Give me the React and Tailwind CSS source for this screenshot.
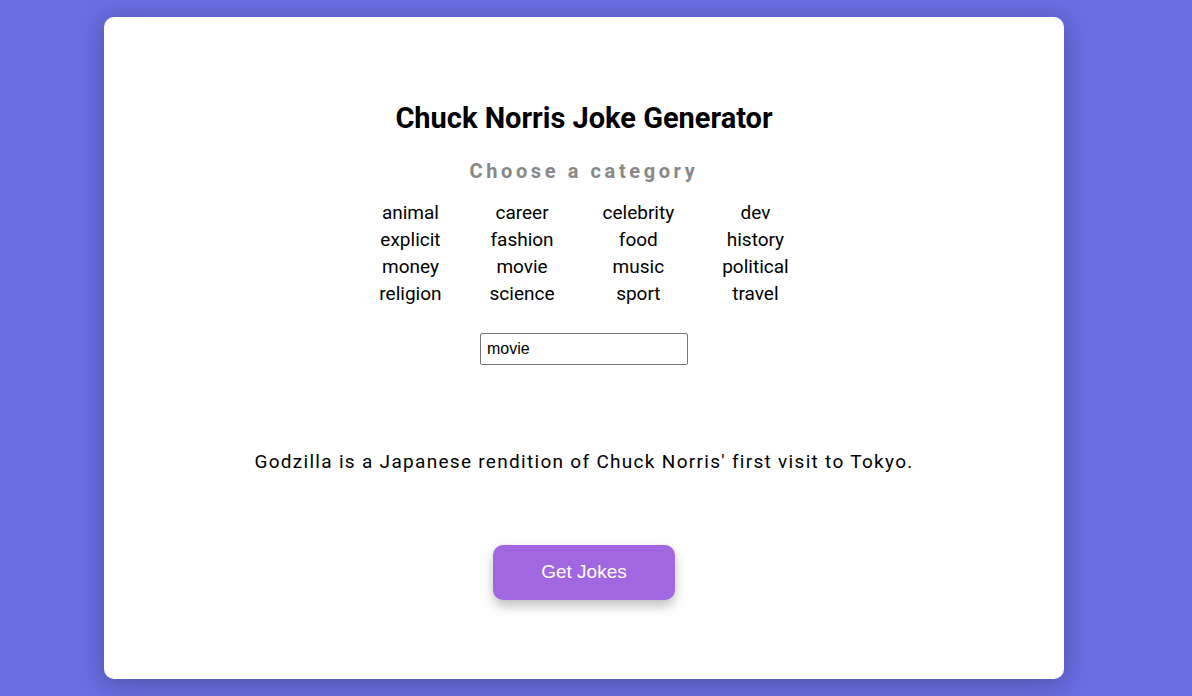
export default function App() {
  const cats = [
    "animal", "career", "celebrity", "dev",
    "explicit", "fashion", "food", "history",
    "money", "movie", "music", "political",
    "religion", "science", "sport", "travel",
  ];
  return (
    <div className="w-[1192px] h-[696px] overflow-hidden bg-[#686de0] pt-[17px]" style={{ fontFamily: "Roboto, sans-serif" }}>
      <div className="ml-[104px] w-[960px] h-[662px] bg-white rounded-[10px] shadow-[0_4px_24px_rgba(0,0,0,0.25)] flex flex-col items-center pt-[84px]">
        <h1 className="text-[29px] font-bold leading-[34px] text-black">Chuck Norris Joke Generator</h1>
        <h2 className="mt-[22px] text-[20px] font-bold leading-[28px] tracking-[3.6px] text-[#888888]">Choose a category</h2>
        <div className="mt-[14px] grid grid-cols-[repeat(4,auto)] gap-x-[48px] text-[19px] leading-[27px] text-black text-center">
          {cats.map((c) => (
            <div key={c}>{c}</div>
          ))}
        </div>
        <input
          readOnly
          value="movie"
          className="mt-[26px] w-[208px] h-[32px] border border-[#767676] rounded-[2px] px-[6px] text-[16px] text-black outline-none"
          style={{ fontFamily: "'Liberation Sans', Arial, sans-serif" }}
        />
        <p className="mt-[83px] text-[19px] leading-[27px] tracking-[1.3px] text-black">Godzilla is a Japanese rendition of Chuck Norris' first visit to Tokyo.</p>
        <button
          className="mt-[70px] w-[182px] h-[55px] rounded-[10px] bg-[#a067e0] text-white text-[19px] shadow-[0_6px_12px_rgba(0,0,0,0.25)]"
          style={{ fontFamily: "'Liberation Sans', Arial, sans-serif" }}
        >
          Get Jokes
        </button>
      </div>
    </div>
  );
}
